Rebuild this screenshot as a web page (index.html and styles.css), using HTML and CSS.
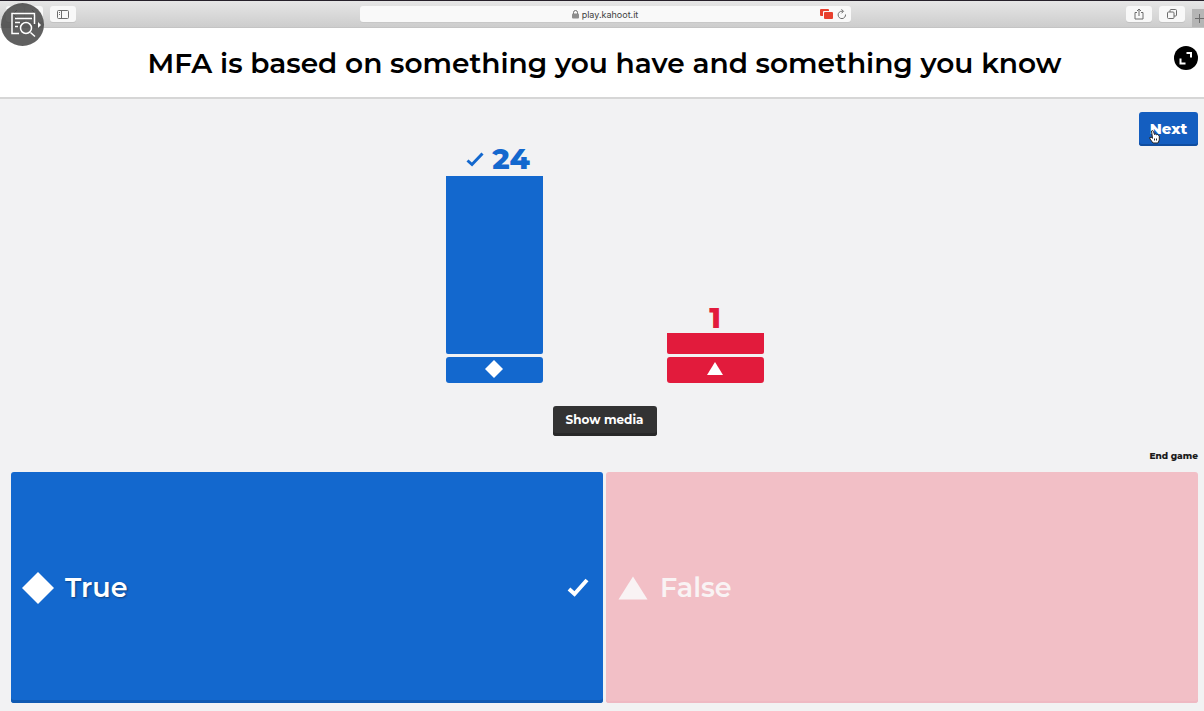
FILE: index.html
```html
<!DOCTYPE html>
<html lang="en">
<head>
<meta charset="utf-8">
<title>Kahoot!</title>
<link rel="stylesheet" href="styles.css">
</head>
<body>
<div class="browser-bar">
  <div class="bar-side">
    <div class="nav-pair">
      <button class="nav-half" aria-label="Back"><svg width="8" height="10" viewBox="0 0 8 10"><path d="M6 1 2 5l4 4"/></svg></button>
      <button class="nav-half" aria-label="Forward"><svg width="8" height="10" viewBox="0 0 8 10"><path d="M2 1l4 4-4 4"/></svg></button>
    </div>
    <button class="tool" aria-label="Sidebar"><svg width="12" height="9" viewBox="0 0 12 9"><rect x=".5" y=".5" width="11" height="8" rx="1"/><path d="M4.500 1v7M2 2.500h1M2 4.500h1"/></svg></button>
  </div>
  <div class="address">
    <span class="site"><svg width="7" height="9" viewBox="0 0 7 9"><path class="lock-loop" d="M1.500 4V2.500a2 2 0 0 1 4 0V4"/><rect class="lock-body" y="3.500" width="7" height="5" rx="1"/></svg>play.kahoot.it</span>
    <span class="address-icons">
      <svg width="13" height="10" viewBox="0 0 13 10"><path class="tabs-red" d="M1 0h7q1 0 1 1v1H4q-1 0-1 1v4H1q-1 0-1-1V1q0-1 1-1z"/><rect class="tabs-red" x="4" y="3" width="9" height="7" rx="1"/></svg>
      <button class="reload" aria-label="Reload"><svg width="10" height="11" viewBox="0 0 10 11"><path d="M8.500 5.500A3.700 3.700 0 1 1 5 2.200h1M4.500.300l2 2-2 2"/></svg></button>
    </span>
  </div>
  <div class="bar-side bar-end">
    <button class="tool" aria-label="Share"><svg width="10" height="12" viewBox="0 0 10 12"><path d="M3 4.500H1v6.500h8V4.500H7M5 8V1M3 3l2-2 2 2"/></svg></button>
    <button class="tool" aria-label="Show tabs"><svg width="10" height="10" viewBox="0 0 10 10"><path d="M3 3V1.500q0-1 1-1h4.500q1 0 1 1V6q0 1-1 1H7"/><rect x=".5" y="3" width="6.500" height="6.500" rx="1"/></svg></button>
    <button class="new-tab" aria-label="New tab"><svg width="9" height="9" viewBox="0 0 9 9"><path d="M4.500 0v9M0 4.500h9"/></svg></button>
  </div>
</div>
<button class="lens" aria-label="Inspect">
  <svg width="43" height="43" viewBox="0 0 43 43"><path d="M18 30.500h-7v-20h22.500V21M14 15.500h17M14 19.500h5M14 23.500h3M29.500 29.500l4.500 4"/><circle cx="25" cy="25" r="5.500"/><path class="lens-arrow" d="M37 19l3 3-3 3z"/></svg>
</button>

<header class="question">
  <h1>MFA is based on something you have and something you know</h1>
  <button class="expand" aria-label="Full screen"><svg width="24" height="24" viewBox="0 0 24 24"><path d="M12.500 7h4.500v4.500M6.500 12.500v5h5"/></svg></button>
</header>

<main class="stage">
  <section class="results">
    <div class="chart">
      <div class="column blue">
        <div class="count"><svg width="18" height="15" viewBox="0 0 18 15"><path d="M1.500 8.500 6 12.500 16.500 1.500"/></svg>24</div>
        <div class="bar" style="height:178px"></div>
        <div class="base"><svg width="18" height="18" viewBox="0 0 18 18"><path d="M9 0l9 9-9 9-9-9z"/></svg></div>
      </div>
      <div class="column red">
        <div class="count">1</div>
        <div class="bar" style="height:21px"></div>
        <div class="base"><svg width="16" height="13" viewBox="0 0 16 13"><path d="M8 0l8 13H0z"/></svg></div>
      </div>
    </div>
    <button class="next">Next<svg class="pointer" width="11" height="14" viewBox="0 0 11 14"><path d="M2.500 1q1.500-1 2 .5l1 3 1-.5 1 .7 1.200-.2.8 1 .8.500v4L9 13H4L1 9 .700 7.500l1.500-.2 1.300 1z"/><path d="M5.500 8.500v2M7.500 8.500v2"/></svg></button>
  </section>
  <button class="media">Show media</button>
  <a class="end" href="#">End game</a>
  <section class="answers">
    <button class="answer correct">
      <svg class="shape" width="32" height="32" viewBox="0 0 32 32"><path d="M16 0l16 16-16 16L0 16z"/></svg>
      <span>True</span>
      <svg class="tick" width="22" height="19" viewBox="0 0 22 19"><path d="M2 11l5.500 5L20 2"/></svg>
    </button>
    <button class="answer wrong">
      <svg class="shape" width="32" height="32" viewBox="0 0 32 32"><path d="M16 4.500 30.500 27.500H1.500z"/></svg>
      <span>False</span>
    </button>
  </section>
</main>
</body>
</html>
```
FILE: styles.css
```css
* {
  box-sizing: border-box;
}

body {
  margin: 0;
  min-height: 100vh;
  display: flex;
  flex-direction: column;
  background: #f2f2f3;
  color: #000;
  font-family: Montserrat, Inter, sans-serif;
}

button {
  border: 0;
  padding: 0;
  font: inherit;
  color: inherit;
  cursor: pointer;
}

svg {
  display: block;
  flex: none;
  fill: none;
}

.browser-bar {
  height: 28px;
  display: grid;
  grid-template-columns: 1fr 491px 1fr;
  align-items: center;
  padding-left: 6px;
  background: linear-gradient(#e6e6e6, #cdcdcd);
  border-top: 1px solid #26202a;
  border-bottom: 1px solid #c4c4c4;
  font-family: Inter, sans-serif;
}

.browser-bar svg {
  stroke: #6d6d6d;
}

.bar-side {
  height: 100%;
  display: flex;
  align-items: center;
  gap: 7px;
}

.bar-end {
  justify-content: flex-end;
}

.nav-pair {
  display: flex;
  gap: 1px;
}

.tool,
.nav-half {
  height: 16px;
  display: grid;
  place-items: center;
  background: #f8f8f8;
  border-radius: 3px;
  box-shadow: 0 1px 0 #c2c2c2;
}

.tool {
  width: 26px;
}

.nav-half {
  width: 18px;
}

.new-tab {
  align-self: flex-end;
  width: 12px;
  height: 18px;
  display: grid;
  place-items: center end;
  background: #b5b5b5;
}

.address {
  height: 16px;
  display: grid;
  grid-template-columns: 1fr auto 1fr;
  align-items: center;
  padding: 0 4px;
  background: #f9f9f9;
  border-radius: 3px;
  box-shadow: 0 1px 0 #c8c8c8;
  color: #414141;
  font-size: 9px;
}

.site {
  grid-column: 2;
  display: flex;
  align-items: center;
  gap: 3px;
}

.browser-bar .lock-body {
  fill: #8e8e8e;
  stroke: none;
}

.address-icons {
  display: flex;
  justify-content: flex-end;
  align-items: center;
  gap: 4px;
}

.browser-bar .tabs-red {
  fill: #e8402f;
  stroke: none;
}

.reload {
  background: none;
}

.lens {
  position: absolute;
  top: 3px;
  left: 1px;
  width: 43px;
  height: 43px;
  border-radius: 50%;
  background: rgba(70, 70, 70, 0.86);
}

.lens svg {
  stroke: #fff;
  stroke-width: 1.5;
}

.lens .lens-arrow {
  fill: #fff;
  stroke: none;
}

.question {
  min-height: 71px;
  display: grid;
  grid-template-columns: 24px 1fr 24px;
  align-items: center;
  padding: 0 6px 0 11px;
  background: #fff;
  border-bottom: 2px solid #d6d6d6;
}

h1 {
  grid-column: 2;
  margin: 0;
  text-align: center;
  font-size: 28px;
  line-height: 40px;
  font-weight: 600;
}

.expand {
  align-self: start;
  width: 24px;
  height: 24px;
  margin-top: 18px;
  border-radius: 50%;
  background: #000;
}

.expand svg {
  stroke: #fff;
  stroke-width: 2;
}

.stage {
  flex: 1;
  display: flex;
  flex-direction: column;
  padding: 13px 6px 8px 11px;
}

.results {
  display: grid;
  grid-template-columns: 1fr auto 1fr;
}

.chart {
  grid-column: 2;
  display: flex;
  align-items: flex-end;
  gap: 124px;
  padding-top: 32px;
}

.column {
  width: 97px;
}

.blue {
  --tone: #1368ce;
}

.red {
  --tone: #e21b3c;
}

.count {
  display: flex;
  justify-content: center;
  align-items: center;
  gap: 8px;
  padding-bottom: 2px;
  color: var(--tone);
  font-size: 29px;
  line-height: 30px;
  font-weight: 800;
}

.blue .count {
  padding-left: 8px;
}

.red .count {
  padding-bottom: 0;
}

.count svg {
  stroke: var(--tone);
  stroke-width: 3;
}

.bar {
  background: var(--tone);
  border-radius: 0 0 2px 2px;
}

.base {
  height: 26px;
  margin-top: 3px;
  padding-bottom: 3px;
  display: grid;
  place-items: center;
  background: var(--tone);
  border-radius: 3px;
}

.base svg,
.shape {
  fill: #fff;
}

.next {
  position: relative;
  justify-self: end;
  align-self: start;
  width: 59px;
  height: 34px;
  padding-bottom: 2px;
  background: #145ec0;
  border-radius: 3px;
  box-shadow: inset 0 -2px 0 #104d9f;
  color: #fff;
  font-size: 15px;
  font-weight: 800;
}

.pointer {
  position: absolute;
  top: 18px;
  left: 10px;
  fill: #fff;
  stroke: #222;
}

.media {
  align-self: center;
  width: 104px;
  height: 30px;
  margin-top: 23px;
  padding-bottom: 3px;
  background: #333;
  border-radius: 3px;
  box-shadow: inset 0 -3px 0 #282828;
  color: #fff;
  font-size: 12px;
  font-weight: 700;
}

.end {
  align-self: flex-end;
  margin: 10px 0 6px;
  color: #1c1c1c;
  font-size: 9px;
  line-height: 20px;
  font-weight: 800;
  text-decoration: none;
}

.answers {
  flex: 1;
  display: grid;
  grid-template-columns: 1fr 1fr;
  gap: 3px;
}

.answer {
  display: flex;
  align-items: center;
  gap: 11px;
  padding: 0 14px 0 11px;
  border-radius: 3px;
  color: #fff;
  font-size: 27px;
  font-weight: 600;
}

.correct {
  background: #1368ce;
  box-shadow: inset 0 -3px 0 #105ab2;
  text-shadow: 1px 1px 2px rgba(0, 0, 0, 0.4);
}

.wrong {
  background: #f2bfc6;
  box-shadow: inset 0 -2px 0 #efb9c3;
  color: #f9f3f4;
}

.wrong .shape {
  fill: #f9f3f4;
}

.tick {
  margin-left: auto;
  stroke: #fff;
  stroke-width: 4;
}
```
